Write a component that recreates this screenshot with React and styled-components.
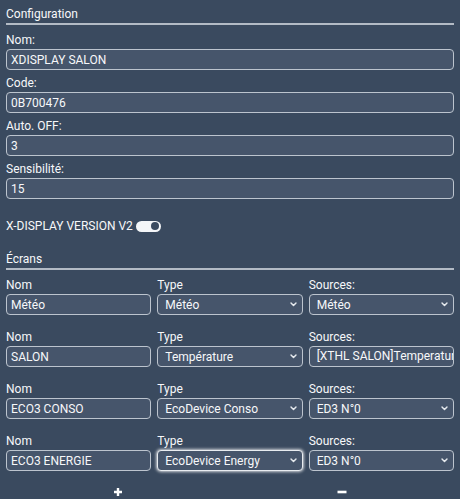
import React from "react";
import styled, { createGlobalStyle } from "styled-components";

const GlobalStyle = createGlobalStyle`
  html, body {
    margin: 0;
    padding: 0;
    background: #3a4a5f;
  }
  body {
    font-family: Roboto, "Liberation Sans", Arial, sans-serif;
    color: #f7f8fa;
  }
`;

const Page = styled.div`
  width: 460px;
  height: 499px;
  box-sizing: border-box;
  padding: 0 6px;
  background: #3a4a5f;
  overflow: hidden;
  font-size: 12px;
`;

const SectionTitle = styled.div`
  padding-top: ${(p) => p.$top}px;
  line-height: 14px;
  padding-bottom: 2px;
  border-bottom: 2px solid #b3bbc5;
  margin-bottom: 8px;
`;

const Field = styled.div`
  display: flex;
  flex-direction: column;
  gap: 2px;
  margin-bottom: 6px;
`;

const Label = styled.label`
  line-height: 14px;
  height: 14px;
  white-space: nowrap;
`;

const boxStyles = `
  box-sizing: border-box;
  width: 100%;
  min-width: 0;
  height: 21px;
  margin: 0;
  border: 1px solid #bcc4ce;
  border-radius: 4px;
  background: #46556b;
  color: #f7f8fa;
  font-family: Roboto, "Liberation Sans", Arial, sans-serif;
  font-size: 12px;
  outline: none;
`;

const TextInput = styled.input`
  ${boxStyles}
  padding: 0 4px;
`;

const SelectWrap = styled.div`
  position: relative;
  width: 100%;
`;

const Select = styled.select`
  ${boxStyles}
  appearance: none;
  padding: 0 18px 0 7px;
  box-shadow: ${(p) => (p.$focused ? "0 0 3px 1px rgba(255,255,255,0.75)" : "none")};
  border-color: ${(p) => (p.$focused ? "#e8ecf0" : "#bcc4ce")};
`;

const Chevron = styled.svg`
  position: absolute;
  right: 6px;
  top: 8px;
  width: 7px;
  height: 5px;
  pointer-events: none;
`;

/* a read-only source whose long name runs under the right edge */
const ClippedBox = styled.div`
  ${boxStyles}
  padding: 0 0 0 7px;
  line-height: 19px;
  white-space: nowrap;
  overflow: hidden;
`;

const ToggleRow = styled.div`
  display: flex;
  align-items: center;
  gap: 3px;
  margin-top: 20px;
  height: 14px;
  line-height: 14px;
`;

const Switch = styled.span`
  display: inline-flex;
  align-items: center;
  justify-content: flex-end;
  box-sizing: border-box;
  width: 25px;
  height: 11px;
  padding: 0 2px;
  border-radius: 6px;
  background: #f4f6f8;
`;

const Knob = styled.span`
  width: 8px;
  height: 8px;
  border-radius: 50%;
  background: #3a4a5f;
`;

const ScreenRow = styled.div`
  display: grid;
  grid-template-columns: repeat(3, minmax(0, 1fr));
  column-gap: 6px;
  margin-bottom: 15px;
`;

const Cell = styled.div`
  display: flex;
  flex-direction: column;
  gap: 2px;
  min-width: 0;
`;

const Actions = styled.div`
  display: grid;
  grid-template-columns: 1fr 1fr;
  margin-top: -2px;
`;

const ActionButton = styled.button`
  justify-self: center;
  width: 20px;
  height: 16px;
  padding: 0;
  border: none;
  background: transparent;
  display: flex;
  align-items: center;
  justify-content: center;
  cursor: pointer;
`;

const ChevronIcon = () => (
  <Chevron viewBox="0 0 7 5">
    <path d="M1 1 L3.5 3.6 L6 1" fill="none" stroke="#e6eaee" strokeWidth="1.4" strokeLinecap="round" strokeLinejoin="round" />
  </Chevron>
);

const DropDown = ({ value, focused }) => (
  <SelectWrap>
    <Select defaultValue={value} $focused={focused}>
      <option>{value}</option>
    </Select>
    <ChevronIcon />
  </SelectWrap>
);

const config = [
  { label: "Nom:", value: "XDISPLAY SALON" },
  { label: "Code:", value: "0B700476" },
  { label: "Auto. OFF:", value: "3" },
  { label: "Sensibilité:", value: "15" },
];

const screens = [
  { name: "Météo", type: "Météo", source: "Météo" },
  { name: "SALON", type: "Température", source: "[XTHL SALON]Temperature", free: true },
  { name: "ECO3 CONSO", type: "EcoDevice Conso", source: "ED3 N°0" },
  { name: "ECO3 ENERGIE", type: "EcoDevice Energy", source: "ED3 N°0", focused: true },
];

export default function App() {
  return (
    <>
      <GlobalStyle />
      <Page>
        <SectionTitle $top={7}>Configuration</SectionTitle>
        {config.map((f) => (
          <Field key={f.label}>
            <Label>{f.label}</Label>
            <TextInput defaultValue={f.value} />
          </Field>
        ))}
        <ToggleRow>
          <span>X-DISPLAY VERSION V2</span>
          <Switch>
            <Knob />
          </Switch>
        </ToggleRow>
        <SectionTitle $top={19}>Écrans</SectionTitle>
        {screens.map((s, i) => (
          <ScreenRow key={i}>
            <Cell>
              <Label>Nom</Label>
              <TextInput defaultValue={s.name} />
            </Cell>
            <Cell>
              <Label>Type</Label>
              <DropDown value={s.type} focused={s.focused} />
            </Cell>
            <Cell>
              <Label>Sources:</Label>
              {s.free ? <ClippedBox>{s.source}</ClippedBox> : <DropDown value={s.source} />}
            </Cell>
          </ScreenRow>
        ))}
        <Actions>
          <ActionButton aria-label="ajouter">
            <svg width="10" height="10" viewBox="0 0 10 10">
              <path d="M5 1 V9 M1 5 H9" stroke="#ffffff" strokeWidth="2.4" />
            </svg>
          </ActionButton>
          <ActionButton aria-label="retirer">
            <svg width="10" height="10" viewBox="0 0 10 10">
              <path d="M0.5 5 H9.5" stroke="#ffffff" strokeWidth="2.6" />
            </svg>
          </ActionButton>
        </Actions>
      </Page>
    </>
  );
}
